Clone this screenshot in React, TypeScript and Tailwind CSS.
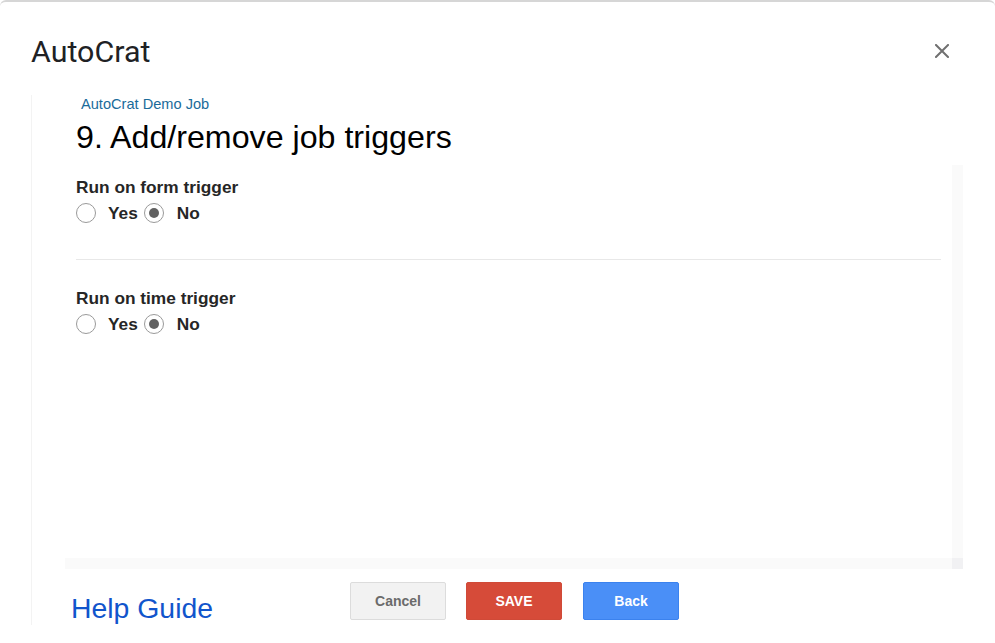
import React from "react";

const arial = { fontFamily: '"Liberation Sans", Arial, sans-serif' };

function Radio({ checked }: { checked?: boolean }) {
  return (
    <span className="w-[20px] h-[20px] rounded-full border border-[#9a9a9a] bg-white flex items-center justify-center shrink-0">
      {checked ? <span className="w-[10px] h-[10px] rounded-full bg-[#616161]" /> : null}
    </span>
  );
}

function TriggerGroup({ label }: { label: string }) {
  return (
    <div>
      <div className="text-[17.3px] leading-[20px] font-bold text-[#262626]">{label}</div>
      <div className="mt-[4px] h-[23px] flex items-center text-[17.3px] leading-[20px] font-bold text-[#262626]">
        <Radio />
        <span className="ml-[12px]">Yes</span>
        <span className="ml-[6px]">
          <Radio checked />
        </span>
        <span className="ml-[13px]">No</span>
      </div>
    </div>
  );
}

export default function App() {
  return (
    <div className="w-[995px] h-[643px] bg-white border-t-2 border-[#d6d6d6] rounded-t-[6px] overflow-hidden">
      <header className="h-[93px] flex items-start justify-between pt-[32px] pl-[31px] pr-[46px]">
        <div
          className="text-[30.4px] leading-[36px] text-[#202124]"
          style={{ fontFamily: 'Roboto, "Noto Sans", sans-serif' }}
        >
          AutoCrat
        </div>
        <svg width="14" height="14" viewBox="0 0 14 14" className="mt-[10px]">
          <path d="M1 1 L13 13 M13 1 L1 13" stroke="#707070" strokeWidth="2" strokeLinecap="square" />
        </svg>
      </header>

      <div className="ml-[31px] mr-[32px] h-[530px] border-l border-[#f3f3f3] overflow-hidden flex flex-col" style={arial}>
        <div className="pl-[49px] mt-[1px] text-[14.6px] leading-[17px] text-[#1a6b9a]">AutoCrat Demo Job</div>
        <h1 className="pl-[44px] mt-[6px] text-[32.2px] leading-[36px] text-black font-normal">
          9. Add/remove job triggers
        </h1>

        <div className="ml-[33px] mt-[10px] w-[898px] h-[404px] flex flex-col">
          <div className="flex h-[393px]">
            <div className="flex-1 px-[11px] pt-[12px]">
              <TriggerGroup label="Run on form trigger" />
              <div className="mt-[35px] h-px bg-[#e8e8e8]" />
              <div className="mt-[28px]">
                <TriggerGroup label="Run on time trigger" />
              </div>
            </div>
            <div className="w-[11px] bg-[#fafafa]" />
          </div>
          <div className="flex h-[11px]">
            <div className="flex-1 bg-[#fafafa]" />
            <div className="w-[11px] bg-[#f1f1f3]" />
          </div>
        </div>

        <div className="flex items-start pl-[39px]">
          <div className="w-[279px] mt-[23px] text-[28.4px] leading-[32px] text-[#1155cc]">Help Guide</div>
          <div className="mt-[13px] flex gap-[20px] text-[14px] font-bold">
            <button className="w-[96px] h-[38px] rounded-[2px] border border-[#dcdcdc] bg-[#f2f2f2] text-[#6b6b6b]">
              Cancel
            </button>
            <button className="w-[96px] h-[38px] rounded-[2px] border border-[#d04a38] bg-[#d64b39] text-white">
              SAVE
            </button>
            <button className="ml-px w-[96px] h-[38px] rounded-[2px] border border-[#3b82ee] bg-[#4a8ff7] text-white">
              Back
            </button>
          </div>
        </div>
      </div>
    </div>
  );
}
